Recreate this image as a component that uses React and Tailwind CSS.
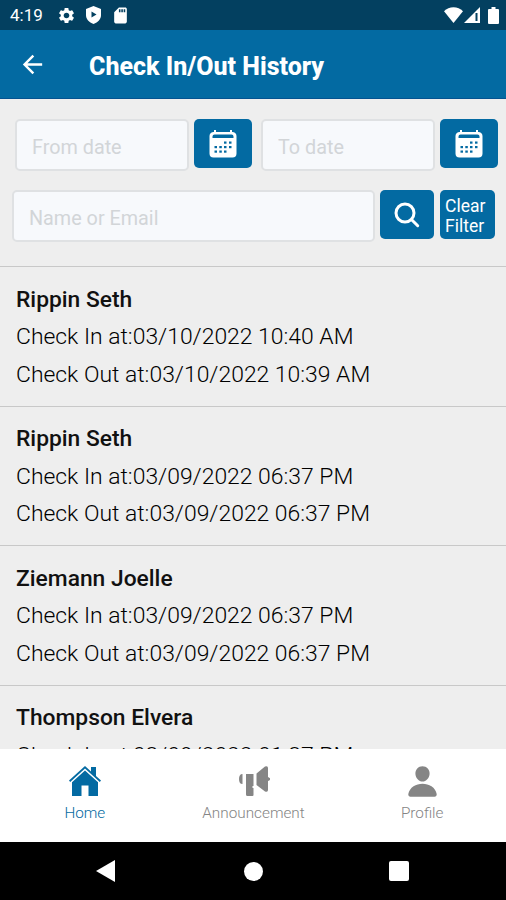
import React from 'react';
import { IoPerson } from 'react-icons/io5';
import { MdArrowBack, MdSettings, MdSdCard } from 'react-icons/md';

const records = [
  { name: 'Rippin Seth', checkIn: '03/10/2022 10:40 AM', checkOut: '03/10/2022 10:39 AM' },
  { name: 'Rippin Seth', checkIn: '03/09/2022 06:37 PM', checkOut: '03/09/2022 06:37 PM' },
  { name: 'Ziemann Joelle', checkIn: '03/09/2022 06:37 PM', checkOut: '03/09/2022 06:37 PM' },
  { name: 'Thompson Elvera', checkIn: '03/09/2022 01:37 PM', checkOut: '03/09/2022 01:37 PM' },
];

const HomeIcon = () => (
  <svg width="34" height="32" viewBox="0 0 34 32" fill="currentColor">
    <path d="M17 1 1 15.5l1.200 1.400L17 3.600l14.800 13.300L33 15.500l-5-4.600V2h-5v4.400z" />
    <path d="M17 5.500 4 17.200V31h9.500V20.500h7V31H30V17.200z" />
  </svg>
);

const MegaphoneIcon = () => (
  <svg width="32" height="32" viewBox="0 0 32 32" fill="currentColor">
    <path d="M4.500 9C2 9 1 11 1 14s1 5 3.500 5z" />
    <path d="M8 9h7.500v12h-1v2h1v7a1 1 0 0 1-1 1h-5A1.500 1.500 0 0 1 8 29.500z" />
    <path d="M18.500 8.500 27 1.600Q30 .5 30 3v9q4.500 2 0 4v9q0 2.500-3 1.400L18.500 20z" />
  </svg>
);

const CalendarIcon = () => (
  <svg width="28" height="28" viewBox="0 0 28 28">
    <path
      d="M5 0h2v2h14V0h2v2a4 4 0 0 1 4.500 4v17.500a4 4 0 0 1-4 4h-19a4 4 0 0 1-4-4V6A4 4 0 0 1 5 2z"
      fill="currentColor"
    />
    <path d="M5.500 4.500h17a2 2 0 0 1 2 2V8h-21V6.500a2 2 0 0 1 2-2z" fill="#036aa2" />
    <g fill="#036aa2">
      {[15, 20].map((x) => <rect key={x} x={x} y="11.500" width="2.500" height="2.200" />)}
      {[5.500, 10.300, 15, 20].map((x) => <rect key={x} x={x} y="16" width="2.500" height="2.200" />)}
      {[5.500, 10.300, 15].map((x) => <rect key={x} x={x} y="20.500" width="2.500" height="2.200" />)}
    </g>
  </svg>
);

const SearchIcon = () => (
  <svg width="26" height="26" viewBox="0 0 26 26" fill="none" stroke="currentColor" strokeWidth="3" strokeLinecap="round">
    <circle cx="11" cy="11" r="9" />
    <path d="m17.700 17.700 6 6" />
  </svg>
);

const StatusBar = () => (
  <div className="flex h-[30px] shrink-0 items-center bg-[#034060] pl-[10px] pr-[7px] text-white">
    <span className="w-[47px] pt-0.5 text-[17px]">4:19</span>
    <MdSettings size={19} />
    <svg className="ml-[9px]" width="17" height="18" viewBox="0 0 17 18">
      <path d="M8.500 0 16 3v6c0 4-3 7.500-7.500 9C4 16.500 1 13 1 9V3z" fill="currentColor" />
      <path d="M6.500 5.500v6l5-3z" fill="#034060" />
    </svg>
    <MdSdCard className="ml-[9px]" size={19} />
    <div className="ml-auto flex items-center">
      <svg width="19" height="16" viewBox="0 0 19 16" fill="currentColor">
        <path d="M9.500 16 0 4.200C5-1 14-1 19 4.200z" />
      </svg>
      <svg className="ml-px" width="16" height="16" viewBox="0 0 16 16">
        <path d="M16 0v16H0z" fill="currentColor" />
        <path d="M12.500 6v8" stroke="#034060" strokeWidth="2" />
      </svg>
      <svg className="ml-2" width="11" height="17" viewBox="0 0 11 17" fill="currentColor">
        <path d="M3.500 0h4v2H10a1 1 0 0 1 1 1v13a1 1 0 0 1-1 1H1a1 1 0 0 1-1-1V3a1 1 0 0 1 1-1h2.500z" />
      </svg>
    </div>
  </div>
);

const Header = () => (
  <header className="flex h-[69px] shrink-0 items-center border-b border-[#045391] bg-[#036aa2] pl-[18px] text-white">
    <button type="button">
      <MdArrowBack size={29} />
    </button>
    <h1 className="ml-[42px] mt-[5px] text-[25px] font-extrabold">Check In/Out History</h1>
  </header>
);

const inputClass =
  'min-w-0 rounded-[5px] border-2 border-[#dfe1e3] bg-[#f7f9fc] px-[15px] pt-1 text-[19.800px] text-[#222] outline-none placeholder:text-[#d2d5d8] h-[52px]';

const CalendarButton = () => (
  <button type="button" className="flex h-[49px] w-[58px] items-center justify-center rounded-[5px] bg-[#036aa2] text-white">
    <CalendarIcon />
  </button>
);

const Filters = () => (
  <div className="h-[168px] shrink-0 border-b border-[#c8c8c8] pt-5">
    <div className="flex items-start pl-[15px]">
      <input className={`${inputClass} w-[174px]`} placeholder="From date" />
      <div className="ml-[5px]"><CalendarButton /></div>
      <input className={`${inputClass} ml-[9px] w-[174px]`} placeholder="To date" />
      <div className="ml-[5px]"><CalendarButton /></div>
    </div>
    <div className="mt-[19px] flex items-start pl-3">
      <input className={`${inputClass} w-[363px]`} placeholder="Name or Email" />
      <button type="button" className="ml-[5px] flex h-[49px] w-[54px] items-center justify-center rounded-[5px] bg-[#036aa2] text-white">
        <SearchIcon />
      </button>
      <button type="button" className="ml-[6px] h-[49px] w-[55px] rounded-[5px] bg-[#036aa2] pl-[5px] pt-[3px] text-left text-[17.500px] leading-5 text-white">
        Clear Filter
      </button>
    </div>
  </div>
);

const RecordItem = ({ name, checkIn, checkOut }) => (
  <li className="h-[139.500px] shrink-0 border-b border-[#c8c8c8] pl-4 pt-[13.800px] text-[22.920px] leading-[37.600px] text-black">
    <p className="text-[22.800px] font-medium text-[#111]">{name}</p>
    <p className="font-light">Check In at:{checkIn}</p>
    <p className="font-light">Check Out at:{checkOut}</p>
  </li>
);

const TabItem = ({ icon, label, active }) => (
  <button type="button" className={`flex flex-1 flex-col items-center pt-[15px] ${active ? 'text-[#036aa2]' : 'text-[#858585]'}`}>
    <span className="flex h-[34px] items-center pl-px">{icon}</span>
    <span className="mt-1 pl-px text-[15.300px] font-light leading-[23px]">{label}</span>
  </button>
);

const App = () => {
  return (
    <div className="flex h-[900px] w-[506px] flex-col overflow-hidden bg-[#eeeeee] font-['Roboto',sans-serif]">
      <StatusBar />
      <Header />
      <Filters />
      <ul className="flex min-h-0 flex-1 flex-col overflow-hidden">
        {records.map((record, index) => (
          <RecordItem key={index} {...record} />
        ))}
      </ul>
      <nav className="flex h-[93px] shrink-0 bg-white">
        <TabItem icon={<HomeIcon />} label="Home" active />
        <TabItem icon={<MegaphoneIcon />} label="Announcement" />
        <TabItem icon={<IoPerson size={35} />} label="Profile" />
      </nav>
      <div className="flex h-[58px] shrink-0 items-center bg-black pl-[96px] text-white">
        <svg width="19" height="22" viewBox="0 0 19 22" fill="currentColor">
          <path d="M19 0v22L0 11z" />
        </svg>
        <div className="ml-[129px] size-[19px] rounded-full bg-white" />
        <div className="ml-[126px] size-5 rounded-[2px] bg-white" />
      </div>
    </div>
  );
};

export default App;
